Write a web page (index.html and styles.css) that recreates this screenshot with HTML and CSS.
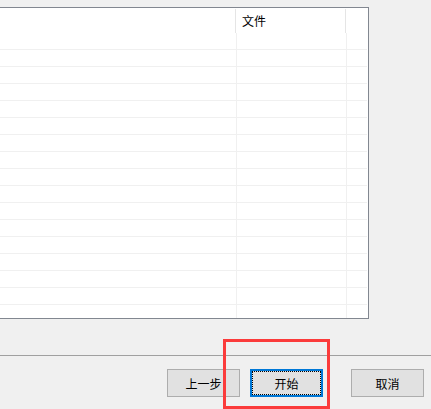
FILE: index.html
```html
<!DOCTYPE html>
<html lang="zh-CN">
<head>
<meta charset="utf-8">
<title>向导</title>
<link rel="stylesheet" href="styles.css">
</head>
<body>
<div class="page">
  <div class="list">
    <div class="list-head">
      <div class="hcell hcell-name"></div>
      <div class="hcell hcell-file">文件</div>
      <div class="hcell hcell-extra"></div>
    </div>
    <div class="list-body">
      <div class="row"><div class="cell c1"></div><div class="cell c2"></div><div class="cell c3"></div></div>
      <div class="row"><div class="cell c1"></div><div class="cell c2"></div><div class="cell c3"></div></div>
      <div class="row"><div class="cell c1"></div><div class="cell c2"></div><div class="cell c3"></div></div>
      <div class="row"><div class="cell c1"></div><div class="cell c2"></div><div class="cell c3"></div></div>
      <div class="row"><div class="cell c1"></div><div class="cell c2"></div><div class="cell c3"></div></div>
      <div class="row"><div class="cell c1"></div><div class="cell c2"></div><div class="cell c3"></div></div>
      <div class="row"><div class="cell c1"></div><div class="cell c2"></div><div class="cell c3"></div></div>
      <div class="row"><div class="cell c1"></div><div class="cell c2"></div><div class="cell c3"></div></div>
      <div class="row"><div class="cell c1"></div><div class="cell c2"></div><div class="cell c3"></div></div>
      <div class="row"><div class="cell c1"></div><div class="cell c2"></div><div class="cell c3"></div></div>
      <div class="row"><div class="cell c1"></div><div class="cell c2"></div><div class="cell c3"></div></div>
      <div class="row"><div class="cell c1"></div><div class="cell c2"></div><div class="cell c3"></div></div>
      <div class="row"><div class="cell c1"></div><div class="cell c2"></div><div class="cell c3"></div></div>
      <div class="row"><div class="cell c1"></div><div class="cell c2"></div><div class="cell c3"></div></div>
      <div class="row"><div class="cell c1"></div><div class="cell c2"></div><div class="cell c3"></div></div>
      <div class="row"><div class="cell c1"></div><div class="cell c2"></div><div class="cell c3"></div></div>
      <div class="row"><div class="cell c1"></div><div class="cell c2"></div><div class="cell c3"></div></div>
    </div>
  </div>
  <div class="separator"></div>
  <div class="buttons">
    <button class="btn btn-prev">上一步</button>
    <button class="btn btn-start"><span class="focus">开始</span></button>
    <button class="btn btn-cancel">取消</button>
    <div class="highlight"></div>
  </div>
</div>
</body>
</html>
```

FILE: styles.css
```css
html, body {
  margin: 0;
  padding: 0;
  background: #f0f0f0;
  overflow: hidden;
}

body {
  width: 431px;
  height: 409px;
  font-family: "Noto Sans CJK SC", "Noto Sans", sans-serif;
  font-size: 12px;
  color: #000;
}

.page {
  display: flex;
  flex-direction: column;
  padding-top: 7px;
}

.list {
  box-sizing: border-box;
  margin-left: -100px;
  width: 469px;
  height: 312px;
  border: 1px solid #828790;
  background: #fff;
  overflow: hidden;
  display: flex;
  flex-direction: column;
}

.list-head {
  display: flex;
  height: 25px;
  flex: none;
}

.hcell {
  box-sizing: border-box;
  height: 24px;
  margin-top: 1px;
  border-right: 1px solid #e5e5e5;
  line-height: 23px;
  padding-left: 6px;
}

.hcell-name { width: 335px; }
.hcell-file { width: 110px; }
.hcell-extra { width: 22px; border-right: none; }

.list-body {
  display: flex;
  flex-direction: column;
}

.row {
  display: flex;
  height: 17px;
  flex: none;
  box-sizing: border-box;
  border-bottom: 1px solid #f0f0f0;
  margin-right: 1px;
}

.cell {
  box-sizing: border-box;
  border-right: 1px solid #f0f0f0;
}

.c1 { width: 336px; }
.c2 { width: 110px; }
.c3 { width: 20px; border-right: none; }

.separator {
  margin-top: 36px;
  height: 1px;
  background: #a0a0a0;
}

.buttons {
  position: relative;
  display: flex;
  justify-content: flex-end;
  padding-top: 13px;
  padding-right: 7px;
}

.btn {
  box-sizing: border-box;
  width: 73px;
  height: 28px;
  margin: 0;
  padding: 0;
  background: #e1e1e1;
  border: 1px solid #adadad;
  border-radius: 0;
  font-family: "Noto Sans CJK SC", "Noto Sans", sans-serif;
  font-size: 12px;
  color: #000;
  display: flex;
  align-items: center;
  justify-content: center;
}

.btn-start {
  margin-left: 10px;
  border: 2px solid #0078d7;
  padding: 0;
}

.focus {
  box-sizing: border-box;
  width: 100%;
  height: 100%;
  border: 1px dotted #000;
  display: flex;
  align-items: center;
  justify-content: center;
}

.btn-cancel {
  margin-left: 28px;
}

.highlight {
  position: absolute;
  left: 223px;
  top: -17px;
  width: 107px;
  height: 70px;
  box-sizing: border-box;
  border: 3px solid #fb3b3b;
  pointer-events: none;
}
```
